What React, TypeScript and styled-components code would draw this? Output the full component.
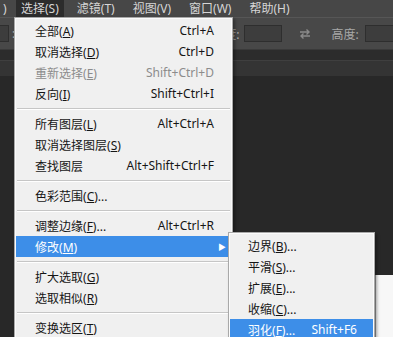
import React from 'react'
import styled, { createGlobalStyle } from 'styled-components'

const GlobalStyle = createGlobalStyle`
  html, body {
    margin: 0;
    padding: 0;
    background: #282828;
  }
  body {
    font-family: "Noto Sans", "Noto Sans CJK SC", sans-serif;
    font-size: 12px;
  }
`

const Screen = styled.div`
  position: relative;
  width: 393px;
  height: 337px;
  overflow: hidden;
  display: grid;
  grid-template-rows: 17px 33px 10px 16px 1fr;
  background: #282828;
`

const MenuBar = styled.div`
  display: flex;
  align-items: stretch;
  gap: 8px;
  background: #474747;
  color: #d6d6d6;
  line-height: 17px;
  padding-left: 2px;
`

const BarItem = styled.div<{ $open?: boolean }>`
  padding: 0 5px;
  background: ${p => (p.$open ? '#2c2c2c' : 'transparent')};
  white-space: nowrap;
`

const Edge = styled.div`
  width: 13px;
  padding-left: 1px;
  margin-right: -8px;
`

const OptionsBar = styled.div`
  display: flex;
  align-items: center;
  background: #484848;
  border-top: 1px solid #565656;
  border-bottom: 1px solid #3a3a3a;
  color: #a8a8a8;
  white-space: nowrap;
`

const Field = styled.div<{ $w: number; $ml?: number }>`
  width: ${p => p.$w}px;
  height: 17px;
  margin-left: ${p => p.$ml ?? 0}px;
  flex-shrink: 0;
  background: #3d3d3d;
  border: 1px solid #2e2e2e;
  box-sizing: border-box;
`

const OptLabel = styled.span<{ $ml?: number }>`
  margin-left: ${p => p.$ml ?? 0}px;
  flex-shrink: 0;
`

const SwapIcon = styled.svg<{ $ml?: number }>`
  margin-left: ${p => p.$ml ?? 0}px;
  flex-shrink: 0;
`

const Gap = styled.div`
  background: #2c2c2c;
`

const TabStrip = styled.div`
  background: #343434;
  border-top: 1px solid #3f3f3f;
`

const Canvas = styled.div`
  position: relative;
  background: #282828;
`

const DocWindow = styled.div`
  position: absolute;
  left: 375px;
  top: 199px;
  width: 40px;
  height: 80px;
  background: #f7f7f7;
  border-left: 1px solid #9a9a9a;
`

const Menu = styled.div<{ $left: number; $top: number; $width: number }>`
  position: absolute;
  left: ${p => p.$left}px;
  top: ${p => p.$top}px;
  width: ${p => p.$width}px;
  box-sizing: border-box;
  background: #f0f0f0;
  border: 1px solid #a9a9a9;
  box-shadow: inset 0 0 0 1px #fbfbfb, 2px 2px 3px rgba(0, 0, 0, 0.35);
  padding: 2px 1px 3px;
  color: #111;
`

const Row = styled.div<{ $active?: boolean; $disabled?: boolean; $pl: number; $pr: number }>`
  display: grid;
  grid-template-columns: 1fr auto ${p => p.$pr}px;
  align-items: center;
  height: 21px;
  padding-left: ${p => p.$pl}px;
  background: ${p => (p.$active ? '#3d8ee8' : 'transparent')};
  color: ${p => (p.$active ? '#ffffff' : p.$disabled ? '#8c8c8c' : '#151515')};
  white-space: nowrap;
`

const Shortcut = styled.span`
  text-align: right;
`

const Arrow = styled.span`
  font-size: 8px;
  padding-left: 4px;
`

const Separator = styled.div`
  height: 0;
  margin: 4px 1px 3px;
  border-top: 1px solid #c6c6c6;
  border-bottom: 1px solid #ffffff;
`

type Item =
  | { sep: true }
  | { sep?: false; label: string; key?: string; tail?: string; shortcut?: string; disabled?: boolean; active?: boolean; sub?: boolean }

const mainItems: Item[] = [
  { label: '全部', key: 'A', shortcut: 'Ctrl+A' },
  { label: '取消选择', key: 'D', shortcut: 'Ctrl+D' },
  { label: '重新选择', key: 'E', shortcut: 'Shift+Ctrl+D', disabled: true },
  { label: '反向', key: 'I', shortcut: 'Shift+Ctrl+I' },
  { sep: true },
  { label: '所有图层', key: 'L', shortcut: 'Alt+Ctrl+A' },
  { label: '取消选择图层', key: 'S' },
  { label: '查找图层', shortcut: 'Alt+Shift+Ctrl+F' },
  { sep: true },
  { label: '色彩范围', key: 'C', tail: '...' },
  { sep: true },
  { label: '调整边缘', key: 'F', tail: '...', shortcut: 'Alt+Ctrl+R' },
  { label: '修改', key: 'M', active: true, sub: true },
  { sep: true },
  { label: '扩大选取', key: 'G' },
  { label: '选取相似', key: 'R' },
  { sep: true },
  { label: '变换选区', key: 'T' },
]

const subItems: Item[] = [
  { label: '边界', key: 'B', tail: '...' },
  { label: '平滑', key: 'S', tail: '...' },
  { label: '扩展', key: 'E', tail: '...' },
  { label: '收缩', key: 'C', tail: '...' },
  { label: '羽化', key: 'F', tail: '...', shortcut: 'Shift+F6', active: true },
]

const MenuRows: React.FC<{ items: Item[]; pl: number; pr: number }> = ({ items, pl, pr }) => (
  <>
    {items.map((it, i) =>
      it.sep ? (
        <Separator key={i} />
      ) : (
        <Row key={i} $active={it.active} $disabled={it.disabled} $pl={pl} $pr={pr}>
          <span>
            {it.label}
            {it.key && (
              <>
                (<u>{it.key}</u>)
              </>
            )}
            {it.tail}
          </span>
          <Shortcut>{it.shortcut}</Shortcut>
          <Arrow>{it.sub ? '▶' : ''}</Arrow>
        </Row>
      )
    )}
  </>
)

export default function App() {
  return (
    <Screen>
      <GlobalStyle />
      <MenuBar>
        <Edge>)</Edge>
        <BarItem $open>选择(S)</BarItem>
        <BarItem>滤镜(T)</BarItem>
        <BarItem>视图(V)</BarItem>
        <BarItem>窗口(W)</BarItem>
        <BarItem>帮助(H)</BarItem>
      </MenuBar>
      <OptionsBar>
        <Field $w={30} $ml={-21} />
        <OptLabel $ml={3}>:</OptLabel>
        <OptLabel $ml={197}>宽度:</OptLabel>
        <Field $w={38} $ml={5} />
        <SwapIcon $ml={17} width="12" height="12" viewBox="0 0 12 12">
          <path d="M1 4h9M7.5 1.5L10 4 7.5 6.5" stroke="#8a8a8a" strokeWidth="1.4" fill="none" />
          <path d="M11 8H2M4.5 5.5L2 8l2.5 2.5" stroke="#8a8a8a" strokeWidth="1.4" fill="none" />
        </SwapIcon>
        <OptLabel $ml={20}>高度:</OptLabel>
        <Field $w={40} $ml={6} />
      </OptionsBar>
      <Gap />
      <TabStrip />
      <Canvas>
        <DocWindow />
      </Canvas>

      <Menu $left={14} $top={17} $width={219}>
        <MenuRows items={mainItems} pl={19} pr={17} />
      </Menu>
      <Menu $left={228} $top={232} $width={147}>
        <MenuRows items={subItems} pl={18} pr={16} />
      </Menu>
    </Screen>
  )
}
